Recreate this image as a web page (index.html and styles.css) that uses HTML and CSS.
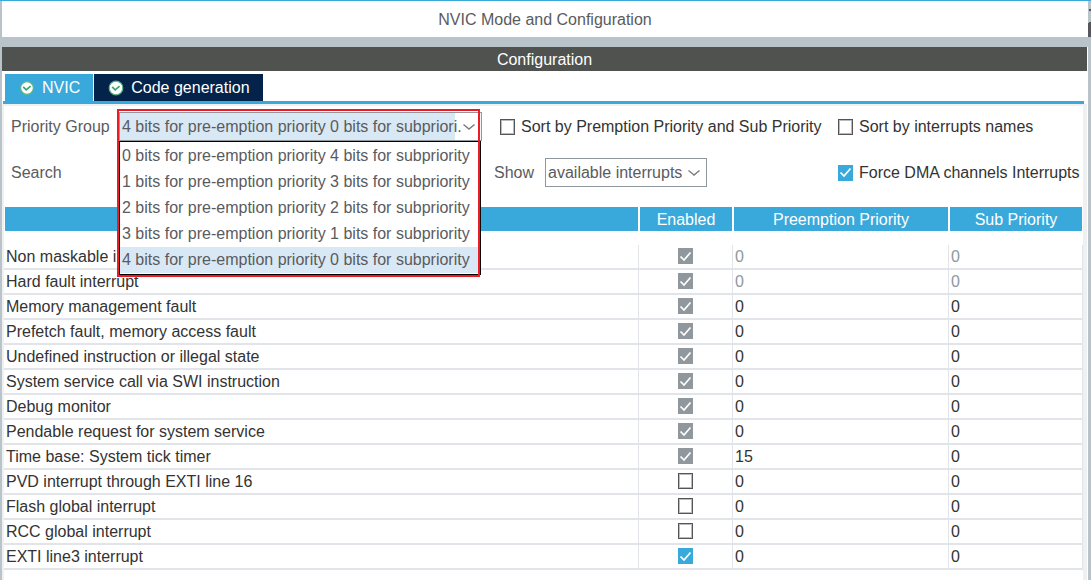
FILE: index.html
```html
<!DOCTYPE html>
<html lang="en">
<head>
<meta charset="utf-8">
<meta name="viewport" content="width=device-width, initial-scale=1">
<title>NVIC Mode and Configuration</title>
<link rel="stylesheet" href="styles.css">
</head>
<body>
<div class="app">
  <main class="view">
    <h1 class="view-title">NVIC Mode and Configuration</h1>
    <section class="config">
      <h2 class="config-title">Configuration</h2>
      <div class="tabs" role="tablist">
        <button class="tab tab-active" type="button" role="tab" aria-selected="true">
          <svg class="tab-icon" viewBox="0 0 16 16" aria-hidden="true"><circle cx="8" cy="8" r="6.4" fill="#fff" stroke="#58b58a" stroke-width="1.2"/><path d="M4.2 6.8L7.2 9.8L11.6 6.2" fill="none" stroke="#3fa46f" stroke-width="1.7"/></svg>
          NVIC
        </button>
        <button class="tab" type="button" role="tab" aria-selected="false">
          <svg class="tab-icon" viewBox="0 0 16 16" aria-hidden="true"><circle cx="8" cy="8" r="6.8" fill="#fff" stroke="#58b58a" stroke-width="1.2"/><path d="M4.2 6.8L7.2 9.8L11.6 6.2" fill="none" stroke="#3fa46f" stroke-width="1.7"/></svg>
          Code generation
        </button>
      </div>
      <div class="panel">
        <form class="filters">
          <label for="group">Priority Group</label>
          <div class="combo">
            <select class="select select-open" id="group">
              <option>4 bits for pre-emption priority 0 bits for subpriori.</option>
            </select>
            <svg class="chevron" viewBox="0 0 12 8" aria-hidden="true"><path d="M0.5 1.5L6 6L11.5 1.5" /></svg>
            <ul class="options" role="listbox" aria-label="Priority Group">
              <li class="option" role="option">0 bits for pre-emption priority 4 bits for subpriority</li>
              <li class="option" role="option">1 bits for pre-emption priority 3 bits for subpriority</li>
              <li class="option" role="option">2 bits for pre-emption priority 2 bits for subpriority</li>
              <li class="option" role="option">3 bits for pre-emption priority 1 bits for subpriority</li>
              <li class="option option-current" role="option" aria-selected="true">4 bits for pre-emption priority 0 bits for subpriority</li>
            </ul>
            <div class="highlight"></div>
          </div>
          <label class="check check-indent"><input class="box" type="checkbox">Sort by Premption Priority and Sub Priority</label>
          <label class="check"><input class="box" type="checkbox">Sort by interrupts names</label>
          <label for="search">Search</label>
          <input class="search" id="search" type="text">
          <div class="show">
            <label for="show">Show</label>
            <div class="combo">
              <select class="select" id="show"><option>available interrupts</option></select>
              <svg class="chevron" viewBox="0 0 12 8" aria-hidden="true"><path d="M0.5 1.5L6 6L11.5 1.5" /></svg>
            </div>
          </div>
          <label class="check"><input class="box" type="checkbox" checked>Force DMA channels Interrupts</label>
        </form>
        <table class="grid">
          <colgroup><col><col class="col-enabled"><col class="col-preempt"><col class="col-sub"></colgroup>
          <thead>
            <tr><th scope="col" aria-label="Interrupt"></th><th scope="col">Enabled</th><th scope="col">Preemption Priority</th><th scope="col">Sub Priority</th></tr>
          </thead>
          <tbody>
            <tr class="locked"><td>Non maskable interrupt</td><td><input class="box" type="checkbox" aria-label="Non maskable interrupt" checked disabled></td><td>0</td><td>0</td></tr>
            <tr class="locked"><td>Hard fault interrupt</td><td><input class="box" type="checkbox" aria-label="Hard fault interrupt" checked disabled></td><td>0</td><td>0</td></tr>
            <tr><td>Memory management fault</td><td><input class="box" type="checkbox" aria-label="Memory management fault" checked disabled></td><td>0</td><td>0</td></tr>
            <tr><td>Prefetch fault, memory access fault</td><td><input class="box" type="checkbox" aria-label="Prefetch fault, memory access fault" checked disabled></td><td>0</td><td>0</td></tr>
            <tr><td>Undefined instruction or illegal state</td><td><input class="box" type="checkbox" aria-label="Undefined instruction or illegal state" checked disabled></td><td>0</td><td>0</td></tr>
            <tr><td>System service call via SWI instruction</td><td><input class="box" type="checkbox" aria-label="System service call via SWI instruction" checked disabled></td><td>0</td><td>0</td></tr>
            <tr><td>Debug monitor</td><td><input class="box" type="checkbox" aria-label="Debug monitor" checked disabled></td><td>0</td><td>0</td></tr>
            <tr><td>Pendable request for system service</td><td><input class="box" type="checkbox" aria-label="Pendable request for system service" checked disabled></td><td>0</td><td>0</td></tr>
            <tr><td>Time base: System tick timer</td><td><input class="box" type="checkbox" aria-label="Time base: System tick timer" checked disabled></td><td>15</td><td>0</td></tr>
            <tr><td>PVD interrupt through EXTI line 16</td><td><input class="box" type="checkbox" aria-label="PVD interrupt through EXTI line 16"></td><td>0</td><td>0</td></tr>
            <tr><td>Flash global interrupt</td><td><input class="box" type="checkbox" aria-label="Flash global interrupt"></td><td>0</td><td>0</td></tr>
            <tr><td>RCC global interrupt</td><td><input class="box" type="checkbox" aria-label="RCC global interrupt"></td><td>0</td><td>0</td></tr>
            <tr><td>EXTI line3 interrupt</td><td><input class="box" type="checkbox" aria-label="EXTI line3 interrupt" checked></td><td>0</td><td>0</td></tr>
          </tbody>
        </table>
      </div>
    </section>
  </main>
  <aside class="edge">
    <svg class="edge-marks" viewBox="0 0 3 40" aria-hidden="true"><path d="M1 8h2v2h-2zM0 22h1v-1h2v15h-3z" fill="#55575b"/></svg>
  </aside>
</div>
</body>
</html>
```
FILE: styles.css
```css
* {
  box-sizing: border-box;
}

:root {
  --blue: #39a9dc;
  --steel: #b8c4ca;
  --line: #e1e5e9;
  --grey: #90989e;
  --text: #333;
  --label: #5a5b5e;
  --pick: #d9e8f5;
}

body {
  margin: 0;
  background: #fff;
  color: var(--text);
  font: 16px/20px "Liberation Sans", Arial, sans-serif;
}

button,
select,
input {
  margin: 0;
  font: inherit;
}

.app {
  display: flex;
  min-height: 100vh;
  border-top: 1px solid var(--blue);
}

.view {
  flex: 1;
  display: flex;
  flex-direction: column;
  min-width: 0;
  border-left: 2px solid var(--steel);
}

.view-title,
.config-title {
  margin: 0;
  font-size: 16px;
  font-weight: normal;
  text-align: center;
}

.view-title {
  padding: 9px 0 7px;
  color: var(--label);
  border-bottom: 10px solid var(--steel);
}

.config {
  flex: 1;
  display: flex;
  flex-direction: column;
  margin-right: 1px;
}

.config-title {
  padding: 3px 0 1px;
  background: #505250;
  color: #fff;
}

.tabs {
  display: flex;
  gap: 1px;
  margin: 3px 3px 0 1px;
  padding-left: 2px;
  border-bottom: 3px solid var(--blue);
}

.tab {
  display: flex;
  align-items: center;
  gap: 7px;
  height: 27px;
  padding: 1px 13px 0 14px;
  border: 0;
  background: #03234b;
  color: #fff;
}

.tab-active {
  background: var(--blue);
}

.tab-icon {
  width: 16px;
  height: 16px;
}

.panel {
  flex: 1;
  border: solid #eef0f2;
  border-width: 2px 4px 0 2px;
}

.filters {
  display: grid;
  grid-template-columns: 108px 375px 344px 1fr;
  row-gap: 17px;
  align-items: center;
  padding: 6px 0 20px 7px;
  color: var(--label);
}

.combo {
  position: relative;
  justify-self: start;
}

.select {
  display: block;
  width: 162px;
  height: 29px;
  padding: 0 0 0 2px;
  appearance: none;
  border: 1px solid var(--grey);
  border-radius: 0;
  background: #fff;
  color: var(--label);
}

.select-open {
  width: 363px;
  background: linear-gradient(to left, #fff 26px, var(--pick) 26px);
}

.chevron {
  position: absolute;
  top: 11px;
  right: 7px;
  width: 12px;
  height: 8px;
  fill: none;
  stroke: #777b7f;
  stroke-width: 1.4;
}

.options {
  position: absolute;
  z-index: 1;
  top: 29px;
  left: 0;
  width: 362px;
  margin: 0;
  padding: 1px 0;
  border: 1px solid #000;
  background: #fff;
  list-style: none;
}

.option {
  padding: 3px 2px;
  white-space: nowrap;
}

.option-current {
  background: var(--pick);
}

.highlight {
  position: absolute;
  z-index: 2;
  top: -3px;
  left: -2px;
  width: 363px;
  height: 168px;
  border: 2px solid #ed1c24;
  pointer-events: none;
}

.search {
  width: 350px;
  height: 29px;
  border: 1px solid var(--grey);
}

.show {
  display: flex;
  align-items: center;
  gap: 11px;
}

.check {
  display: flex;
  align-items: center;
  gap: 6px;
  color: var(--text);
  white-space: nowrap;
}

.check-indent {
  padding-left: 6px;
}

.box {
  flex: none;
  width: 15px;
  height: 16px;
  appearance: none;
  border: 1px solid #555;
  outline: 1px solid #bbb;
  outline-offset: -2px;
  background: #fff;
}

.box:checked {
  border: 0;
  outline: 0;
  background: var(--blue) url("data:image/svg+xml,%3Csvg xmlns='http://www.w3.org/2000/svg' viewBox='0 0 15 15'%3E%3Cpath d='M2.5 7.5L6 11L12.5 3.5' fill='none' stroke='white' stroke-width='1.7'/%3E%3C/svg%3E") center / 15px 15px no-repeat;
}

.box:checked:disabled {
  background-color: var(--grey);
}

.grid {
  width: 100%;
  table-layout: fixed;
  border-collapse: separate;
  border-spacing: 0;
}

.col-enabled {
  width: 94px;
}

.col-preempt {
  width: 216px;
}

.col-sub {
  width: 134px;
}

.grid th {
  height: 24px;
  padding: 3px 0 1px;
  border: solid #fff;
  border-width: 0 1px;
  background: var(--blue);
  color: #fff;
  font-weight: normal;
}

.grid thead::after {
  content: "";
  display: block;
  height: 14px;
}

.grid td {
  height: 25px;
  padding: 2px 2px 1px;
  border: solid var(--line);
  border-width: 0 1px 2px 0;
}

.grid td:nth-child(2) {
  padding: 1px 0 2px;
}

.grid td .box {
  display: block;
  margin: 0 auto;
}

.locked td:nth-child(n + 3) {
  color: var(--grey);
}

.edge {
  width: 3px;
  background: var(--steel);
}

.edge-marks {
  display: block;
  width: 3px;
  height: 40px;
}
```
